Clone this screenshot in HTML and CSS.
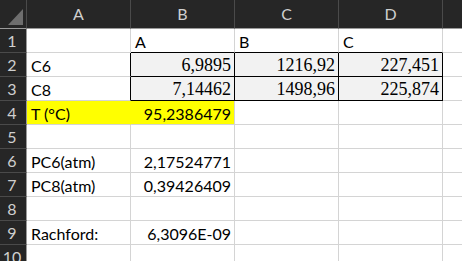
FILE: index.html
```html
<!DOCTYPE html>
<html lang="en">
<head>
    <meta charset="UTF-8">
    <title>Sheet1</title>
    <link rel="stylesheet" href="styles.css">
</head>
<body>
    <div class="sheet">
        <!-- header row -->
        <div class="corner"><div class="select-all"></div></div>
        <div class="col-head">A</div>
        <div class="col-head">B</div>
        <div class="col-head">C</div>
        <div class="col-head">D</div>
        <div class="col-head last"></div>

        <!-- 1 -->
        <div class="row-head">1</div>
        <div class="cell"></div>
        <div class="cell edge-b">A</div>
        <div class="cell edge-b">B</div>
        <div class="cell edge-b">C</div>
        <div class="cell last"></div>

        <!-- 2 -->
        <div class="row-head">2</div>
        <div class="cell edge-r">C6</div>
        <div class="cell box num serif">6,9895</div>
        <div class="cell box num serif">1216,92</div>
        <div class="cell box num serif">227,451</div>
        <div class="cell last"></div>

        <!-- 3 -->
        <div class="row-head">3</div>
        <div class="cell edge-r">C8</div>
        <div class="cell box num serif">7,14462</div>
        <div class="cell box num serif">1498,96</div>
        <div class="cell box num serif">225,874</div>
        <div class="cell last"></div>

        <!-- 4 -->
        <div class="row-head">4</div>
        <div class="cell hl hl-join">T (°C)</div>
        <div class="cell hl num">95,2386479</div>
        <div class="cell"></div>
        <div class="cell"></div>
        <div class="cell last"></div>

        <!-- 5 -->
        <div class="row-head">5</div>
        <div class="cell"></div>
        <div class="cell"></div>
        <div class="cell"></div>
        <div class="cell"></div>
        <div class="cell last"></div>

        <!-- 6 -->
        <div class="row-head">6</div>
        <div class="cell">PC6(atm)</div>
        <div class="cell num">2,17524771</div>
        <div class="cell"></div>
        <div class="cell"></div>
        <div class="cell last"></div>

        <!-- 7 -->
        <div class="row-head">7</div>
        <div class="cell">PC8(atm)</div>
        <div class="cell num">0,39426409</div>
        <div class="cell"></div>
        <div class="cell"></div>
        <div class="cell last"></div>

        <!-- 8 -->
        <div class="row-head">8</div>
        <div class="cell"></div>
        <div class="cell"></div>
        <div class="cell"></div>
        <div class="cell"></div>
        <div class="cell last"></div>

        <!-- 9 -->
        <div class="row-head">9</div>
        <div class="cell">Rachford:</div>
        <div class="cell num">6,3096E-09</div>
        <div class="cell"></div>
        <div class="cell"></div>
        <div class="cell last"></div>

        <!-- 10 -->
        <div class="row-head">10</div>
        <div class="cell"></div>
        <div class="cell"></div>
        <div class="cell"></div>
        <div class="cell"></div>
        <div class="cell last"></div>
    </div>
</body>
</html>
```

FILE: styles.css
```css
* {
    margin: 0;
    padding: 0;
    box-sizing: border-box;
}

body {
    width: 462px;
    height: 261px;
    overflow: hidden;
    background: #fff;
    font-family: Lato, "Open Sans", sans-serif;
    font-size: 16px;
    color: #000;
}

.sheet {
    display: grid;
    grid-template-columns: 27px 104px 104px 104px 104px 1fr;
    grid-template-rows: 29px repeat(10, 24px);
}

.corner {
    background: #262626;
    border-right: 1px solid #4a4a4a;
    border-bottom: 1px solid #9a9a9a;
    display: flex;
    align-items: flex-end;
    justify-content: flex-end;
    padding: 0 3px 3px 0;
}

.select-all {
    width: 15px;
    height: 16px;
    background: #6e6e6e;
    clip-path: polygon(100% 0, 100% 100%, 0 100%);
}

.col-head {
    background: #262626;
    color: #cfcfcf;
    border-right: 1px solid #4a4a4a;
    border-bottom: 1px solid #9a9a9a;
    text-align: center;
    line-height: 28px;
}

.col-head.last {
    border-right: none;
}

.row-head {
    background: #262626;
    color: #cfcfcf;
    border-right: 1px solid #9a9a9a;
    border-bottom: 1px solid #4a4a4a;
    text-align: center;
    line-height: 23px;
    padding-right: 2px;
}

.cell {
    border-right: 1px solid #d4d4d4;
    border-bottom: 1px solid #d4d4d4;
    padding: 0 4px;
    line-height: 25px;
    white-space: nowrap;
    overflow: hidden;
}

.cell.last {
    border-right: none;
}

.num {
    text-align: right;
    padding-right: 3px;
}

.serif {
    font-family: "Liberation Serif", serif;
    font-size: 18px;
}

.box {
    background: #f2f2f2;
    border-right-color: #000;
    border-bottom-color: #000;
}

.edge-b {
    border-bottom-color: #000;
}

.edge-r {
    border-right-color: #000;
}

.hl {
    background: #ffff00;
}

.hl-join {
    border-right-color: #ffff00;
}
```
